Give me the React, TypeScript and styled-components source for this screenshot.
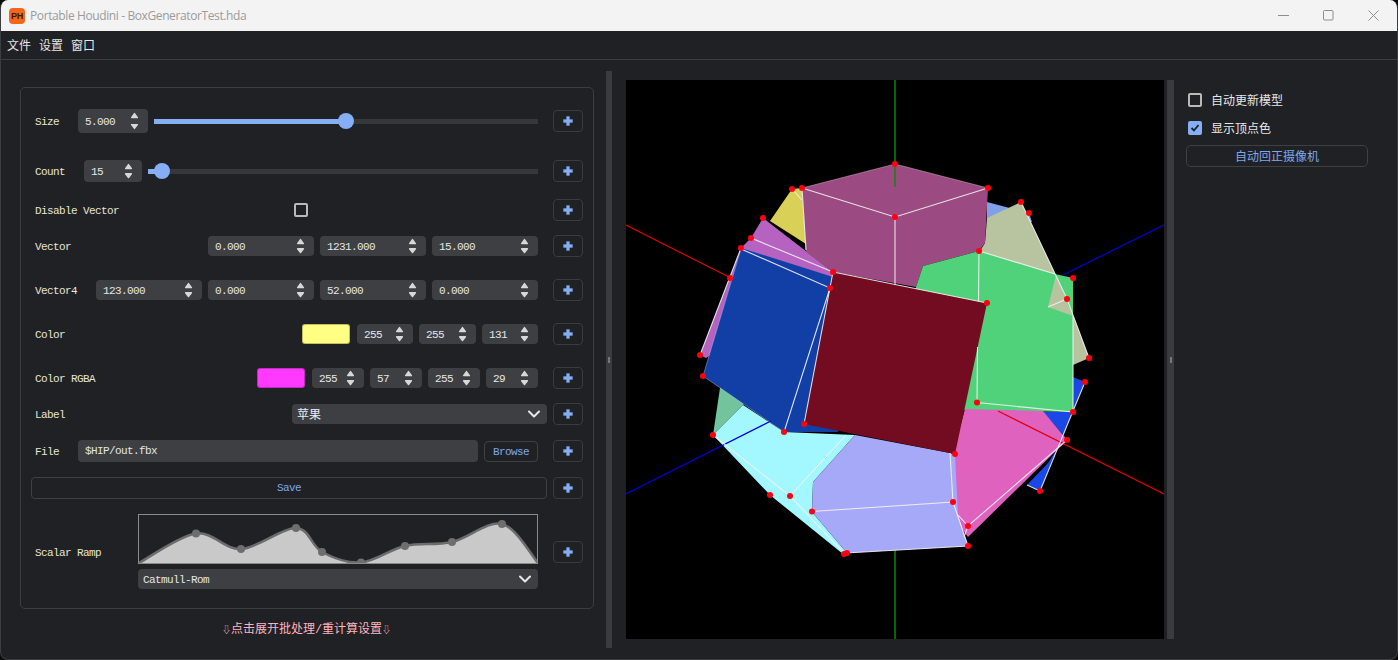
import React from "react";
import styled, { createGlobalStyle } from "styled-components";

const MONO = `"Liberation Mono", "Noto Sans CJK SC", monospace`;
const SANS = `"Noto Sans CJK SC", "Noto Sans", sans-serif`;

const Global = createGlobalStyle`
  html, body { margin: 0; padding: 0; background: #0b0b0c; overflow: hidden; }
  #root { width: 1398px; height: 660px; }
`;

const Win = styled.div`
  width: 1398px; height: 660px; box-sizing: border-box;
  border-radius: 8px; overflow: hidden; background: #202125;
  border: 1px solid #3c3d40; border-top: none;
  display: flex; flex-direction: column;
`;
const TitleBar = styled.div`
  height: 31px; flex: none; background: #f3f3f3; display: flex; align-items: center;
  padding-left: 9px; margin: 0 -1px;
`;
const AppIcon = styled.div`
  width: 16px; height: 16px; border-radius: 4px; background: #f4661c; color: #3a1a08;
  font: 700 9px/16px "Liberation Sans", sans-serif; text-align: center; flex: none; letter-spacing: -0.3px;
`;
const TitleText = styled.div`
  margin-left: 5px; font: 12px/16px "Open Sans", sans-serif; color: #9b9b9b; flex: 1; letter-spacing: -0.39px;
`;
const WinButtons = styled.div`
  display: flex; padding-right: 2px;
`;
const WinBtn = styled.div`
  width: 45px; height: 31px; display: flex; align-items: center; justify-content: center;
  svg { display: block; }
`;
const MenuBar = styled.div`
  height: 28px; flex: none; border-bottom: 1px solid #3c3d40; display: flex; align-items: center;
  padding-left: 6px; gap: 8px; box-sizing: content-box;
`;
const MenuItem = styled.span`
  font: 12px/16px ${SANS}; color: #e6e6e6;
`;
const Main = styled.div`
  flex: 1; display: flex; min-height: 0;
`;
const LeftPane = styled.div`
  width: 605px; flex: none; box-sizing: border-box; padding: 27px 12px 0 19px;
`;
const Card = styled.div`
  border: 1px solid #3c3d40; border-radius: 5px; padding: 21px 10px 19px 10px;
`;
const Row = styled.div<{ $h?: number; $mt?: number }>`
  display: grid; grid-template-columns: 1fr 30px; column-gap: 6px; align-items: center;
  ${(p) => (p.$h ? `height:${p.$h}px;` : "")}
  margin-top: ${(p) => p.$mt ?? 0}px;
`;
const Controls = styled.div<{ $full?: boolean }>`
  display: flex; align-items: center; gap: 6px; min-width: 0;
  padding-left: ${(p) => (p.$full ? 0 : 4)}px;
  padding-right: ${(p) => (p.$full ? 0 : 9)}px;
`;
const monoText = `font: 11px/16px ${MONO}; letter-spacing: -0.6px; padding-top: 2px;`;
const Label = styled.span<{ $w?: number; $auto?: boolean; $ml?: number }>`
  ${monoText} color: #e8e4d6; white-space: nowrap;
  ${(p) => (p.$w ? `width:${p.$w - 6}px; flex:none;` : "")}
  ${(p) => (p.$auto ? "margin-right:auto;" : "")}
  ${(p) => (p.$ml ? `margin-left:${p.$ml}px;` : "")}
`;
const SpinBox = styled.div<{ $w: number; $h: number }>`
  width: ${(p) => p.$w}px; height: ${(p) => p.$h}px; flex: none; box-sizing: border-box;
  background: #3e3f42; border-radius: 4px; display: flex; align-items: center; justify-content: space-between;
  padding: 0 9px 0 7px; color: #e4e6ea;
  svg { display: block; flex: none; }
`;
const SpinValue = styled.span`
  ${monoText}
`;
const SliderTrack = styled.div`
  flex: 1; height: 5px; background: #36373a; position: relative;
`;
const SliderFill = styled.div`
  height: 100%; background: #85aef5;
`;
const Knob = styled.div`
  position: absolute; top: 50%; width: 16px; height: 16px; margin: -8px 0 0 -8px;
  border-radius: 50%; background: #85aef5;
`;
const PlusBtn = styled.div`
  width: 30px; height: 22px; box-sizing: border-box; border: 1px solid #3a3b3f; border-radius: 4px;
  display: flex; align-items: center; justify-content: center;
  svg { display: block; }
`;
const CheckCell = styled.div`
  flex: 1; display: flex; padding-left: 169px;
`;
const CheckBox = styled.div<{ $on?: boolean }>`
  width: 14px; height: 14px; box-sizing: border-box; border-radius: 2px; flex: none;
  border: 2px solid ${(p) => (p.$on ? "#85aef5" : "#b9b9b9")};
  background: ${(p) => (p.$on ? "#85aef5" : "transparent")};
  display: flex; align-items: center; justify-content: center;
  svg { display: block; }
`;
const Swatch = styled.div<{ $c: string }>`
  width: 48px; height: 20px; border-radius: 3px; flex: none; background: ${(p) => p.$c};
  box-sizing: border-box; border: 1px solid rgba(0,0,0,0.25); margin-right: 1px;
`;
const Select = styled.div<{ $w?: number }>`
  ${(p) => (p.$w ? `width:${p.$w}px; flex:none;` : "")}
  height: 20px; box-sizing: border-box; background: #3e3f42; border-radius: 4px;
  display: flex; align-items: center; justify-content: space-between; padding: 0 7px 0 5px;
  color: #eeeeee; font: 12px/16px ${SANS};
  svg { display: block; }
`;
const SelectMono = styled.span`
  ${monoText} color: #e4e6ea;
`;
const PathInput = styled.div`
  flex: 1; height: 22px; background: #3e3f42; border-radius: 4px; box-sizing: border-box;
  padding: 3px 7px 0; color: #e4e6ea; ${monoText} padding-top: 3px;
`;
const LinkBtn = styled.div<{ $grow?: boolean }>`
  ${(p) => (p.$grow ? "flex:1;" : "width:54px; flex:none;")}
  height: ${(p) => (p.$grow ? 22 : 21)}px; box-sizing: border-box; border: 1px solid #3f4044; border-radius: 4px;
  text-align: center; ${monoText} padding-top: 2px; color: #7ea8ea;
`;
const RampCol = styled.div`
  width: 400px; flex: none; display: flex; flex-direction: column; gap: 5px;
  svg { display: block; }
`;
const RampBox = styled.div`
  height: 50px; box-sizing: border-box; border: 1px solid #8a8a8a;
`;
const Expander = styled.div`
  margin-top: 13px; text-align: center; font: 12px/16px ${MONO}; color: #ffb4c0; padding-right: 1px;
`;
const ExpArrow = styled.span`
  font-size: 9px;
`;
const Splitter = styled.div<{ $mt: number; $h: number; $w: number }>`
  width: ${(p) => p.$w}px; height: ${(p) => p.$h}px; margin-top: ${(p) => p.$mt}px; flex: none;
  background: #3a3b3e; display: flex; align-items: center; justify-content: center;
`;
const Grip = styled.div`
  width: 2px; height: 6px; background: #77787b;
`;
const Viewport = styled.div`
  width: 538px; height: 559px; margin: 20px 3px 0 14px; background: #000; flex: none;
  svg { display: block; }
`;
const SidePanel = styled.div`
  flex: 1; padding: 33px 0 0 12px; display: flex; flex-direction: column;
`;
const SideCheck = styled.div<{ $mt?: number }>`
  display: flex; align-items: center; gap: 9px; height: 14px; padding-left: 2px;
  margin-top: ${(p) => p.$mt ?? 0}px;
  font: 12px/14px ${SANS}; color: #e8e8e8;
`;
const CamBtn = styled.div`
  width: 182px; height: 22px; margin-top: 10px; box-sizing: border-box; border: 1px solid #3f4044; border-radius: 5px;
  text-align: center; font: 12px/20px ${SANS}; color: #7ea8ea;
`;

const Arrows = ({ tall }: { tall?: boolean }) => (
  <svg width="9" height={tall ? 18 : 16} viewBox={tall ? "0 0 9 18" : "0 0 9 16"} fill="#d8d8d8" stroke="#d8d8d8" strokeWidth="1.4" strokeLinejoin="round">
    <path d="M1.6 5.6 L4.5 1.6 L7.4 5.6 Z" />
    <path d={tall ? "M1.6 12.6 L7.4 12.6 L4.5 16.4 Z" : "M1.6 10.8 L7.4 10.8 L4.5 14.6 Z"} />
  </svg>
);
const Spin = ({ v, w, h = 20 }: { v: string; w: number; h?: number }) => (
  <SpinBox $w={w} $h={h}>
    <SpinValue>{v}</SpinValue>
    <Arrows tall={h > 22} />
  </SpinBox>
);
const Plus = () => (
  <PlusBtn>
    <svg width="10" height="10" viewBox="0 0 10 10">
      <path d="M3.5 0.5 h3 v3 h3 v3 h-3 v3 h-3 v-3 h-3 v-3 h3 Z" fill="#85aef5" stroke="#85aef5" strokeWidth="0.3" strokeLinejoin="round" />
    </svg>
  </PlusBtn>
);
const Chevron = () => (
  <svg width="12" height="8" viewBox="0 0 12 8" fill="none" stroke="#e8e8e8" strokeWidth="2" strokeLinecap="round" strokeLinejoin="round">
    <path d="M1 1.5 L6 6.5 L11 1.5" />
  </svg>
);

const rampPts: [number, number][] = [
  [0, 49], [57, 19.5], [102, 35], [157, 14], [183, 38], [222, 48.5], [266, 32], [313, 28], [363, 10], [399, 49],
];
const rampPath = () => {
  let d = `M${rampPts[0][0]} ${rampPts[0][1]}`;
  for (let i = 0; i < rampPts.length - 1; i++) {
    const p0 = rampPts[Math.max(i - 1, 0)], p1 = rampPts[i], p2 = rampPts[i + 1], p3 = rampPts[Math.min(i + 2, rampPts.length - 1)];
    const c1 = [p1[0] + (p2[0] - p0[0]) / 6, p1[1] + (p2[1] - p0[1]) / 6];
    const c2 = [p2[0] - (p3[0] - p1[0]) / 6, p2[1] - (p3[1] - p1[1]) / 6];
    d += ` C${c1[0]} ${c1[1]} ${c2[0]} ${c2[1]} ${p2[0]} ${p2[1]}`;
  }
  return d;
};

const Ramp = () => {
  const d = rampPath();
  return (
    <RampBox>
      <svg width="398" height="48" viewBox="0 1 398 48">
        <path d={`${d} Z`} fill="#c9c9c9" />
        <path d={d} fill="none" stroke="#6c6c6c" strokeWidth="2.5" />
        {rampPts.slice(1, -1).map(([x, y]) => (
          <circle key={x} cx={x} cy={y} r="4" fill="#6e6e6e" />
        ))}
      </svg>
    </RampBox>
  );
};

type Poly = { c: string; p: string };
const polys: Poly[] = [
  { c: "#7f9fe8", p: "987,202 1021,211 1029,213 1032,222 987,218" },
  { c: "#d9d058", p: "792,189 802,188 806,244 770,221" },
  { c: "#b562c0", p: "763,218 833,272 833,278 790,300 706,358 700,355 741,248 751,238" },
  { c: "#b8c4a0", p: "1021,202 1067,299 1089,358 1073,365 1040,330 1000,290 980,251 985,243 987,218" },
  { c: "#72c49c", p: "720,388 735,340 760,380 743,405 713,435" },
  { c: "#123fa6", p: "741,248 833,277 834,289 826,307 838,432 784,432 703,376" },
  { c: "#9c4a82", p: "802,188 895,164 988,188 985,243 979,251 923,266 916,287 833,272 806,252" },
  { c: "#1a48e6", p: "1073,377 1085,382 1040,491 1027,485 1048,463 1065,437 1043,412 1073,412" },
  { c: "#50d27a", p: "923,266 979,251 1055,274 1073,278 1073,412 964,410 900,400 916,287" },
  { c: "#b8c4a0", p: "1056,275 1073,316 1048,307" },
  { c: "#a3f7ff", p: "713,435 743,405 784,432 855,435 813,482 812,512 847,553 843,554 770,495" },
  { c: "#e062bf", p: "965,409 1043,411 1067,440 968,537 955,520 953,453" },
  { c: "#a6a8f8", p: "855,435 950,453 955,455 958,515 968,546 847,553 812,512 813,482" },
  { c: "#123fa6", p: "784,432 804,424 838,432" },
  { c: "#730c21", p: "833,272 987,303 955,454 804,424" },
];
const whites: string[] = [
  "802,188 895,217 988,188", "895,217 895,285", "802,188 806,250",
  "741,249 830,288 784,432", "833,272 804,424", "751,238 833,272", "700,355 741,248",
  "792,189 802,200", "979,251 978.5,301", "977.5,347 977,402.5 1073,412", "1073,316 1073,412", "979,251 1055,274",
  "1021,202 1067,299 1089,358", "1048,307 1067,299", "713,435 790,496 845,554", "790,496 846,435",
  "812,511.5 953,502 950,453", "953,502 968,546 846,553", "1067,440 968,526 958,515", "968,526 964,537",
  "1027,485 1040,491 1085,382", "833,272 987,303",
];
const softs: string[] = ["802,188 895,164 988,188", "703,376 741,249", "703,376 784,432"];
const dots: [number, number][] = [
  [895, 164], [792, 189], [802, 188], [988, 188], [895, 217], [763, 218], [751, 238], [741, 248], [730, 278], [833, 272],
  [830, 288], [700, 355], [703, 376], [784, 432], [804, 424], [713, 435], [790, 496], [770, 495], [812, 511.5], [844, 554],
  [847, 553], [968, 546], [953, 502], [968, 526], [955, 454], [1067, 440], [1040, 491], [1073, 412], [977, 402.5], [1085, 382],
  [1089, 358], [1067, 299], [1073, 278], [987, 303], [979, 251], [1021, 202], [1029, 213],
];

const Scene = () => (
  <svg width="538" height="559" viewBox="626 80 538 559">
    <line x1="895" y1="540" x2="895" y2="639" stroke="#0a8a0a" strokeWidth="1.5" />
    <line x1="626" y1="225" x2="731" y2="278" stroke="#e0000c" strokeWidth="1.2" />
    <line x1="1063" y1="275" x2="1164" y2="225" stroke="#0000d8" strokeWidth="1.2" />
    {polys.map((o, i) => (
      <polygon key={i} points={o.p} fill={o.c} />
    ))}
    <line x1="895" y1="80" x2="895" y2="187" stroke="#0a8a0a" strokeWidth="1.5" />
    <line x1="998" y1="411" x2="1164" y2="494" stroke="#e0000c" strokeWidth="1.2" />
    <line x1="626" y1="494" x2="771" y2="421" stroke="#0000d8" strokeWidth="1.2" />
    {softs.map((p, i) => (
      <polyline key={i} points={p} fill="none" stroke="#f2f2f2" strokeOpacity="0.35" strokeWidth="1" />
    ))}
    {whites.map((p, i) => (
      <polyline key={i} points={p} fill="none" stroke="#f2f2f2" strokeOpacity="0.9" strokeWidth="1.1" />
    ))}
    {dots.map(([x, y], i) => (
      <circle key={i} cx={x} cy={y} r="3" fill="#ff0010" />
    ))}
  </svg>
);

export default function App() {
  return (
    <>
      <Global />
      <Win>
        <TitleBar>
          <AppIcon>PH</AppIcon>
          <TitleText>Portable Houdini - BoxGeneratorTest.hda</TitleText>
          <WinButtons>
            <WinBtn>
              <svg width="11" height="11" viewBox="0 0 11 11"><path d="M0 5.5 H11" stroke="#8d8d8d" /></svg>
            </WinBtn>
            <WinBtn>
              <svg width="11" height="11" viewBox="0 0 11 11"><rect x="0.5" y="0.5" width="9.5" height="9.5" rx="1" fill="none" stroke="#8d8d8d" /></svg>
            </WinBtn>
            <WinBtn>
              <svg width="11" height="11" viewBox="0 0 11 11"><path d="M0.5 0.5 L10.5 10.5 M10.5 0.5 L0.5 10.5" stroke="#8d8d8d" /></svg>
            </WinBtn>
          </WinButtons>
        </TitleBar>
        <MenuBar>
          <MenuItem>文件</MenuItem>
          <MenuItem>设置</MenuItem>
          <MenuItem>窗口</MenuItem>
        </MenuBar>
        <Main>
          <LeftPane>
            <Card>
              <Row $h={24}>
                <Controls>
                  <Label $w={43}>Size</Label>
                  <Spin v="5.000" w={70} h={24} />
                  <SliderTrack>
                    <SliderFill style={{ width: "50%" }} />
                    <Knob style={{ left: "50%" }} />
                  </SliderTrack>
                </Controls>
                <Plus />
              </Row>
              <Row $h={22} $mt={27}>
                <Controls>
                  <Label $w={49}>Count</Label>
                  <Spin v="15" w={58} h={22} />
                  <SliderTrack>
                    <SliderFill style={{ width: "3.6%" }} />
                    <Knob style={{ left: "3.6%" }} />
                  </SliderTrack>
                </Controls>
                <Plus />
              </Row>
              <Row $h={22} $mt={17}>
                <Controls>
                  <Label>Disable Vector</Label>
                  <CheckCell>
                    <CheckBox />
                  </CheckCell>
                </Controls>
                <Plus />
              </Row>
              <Row $h={22} $mt={14}>
                <Controls>
                  <Label $auto>Vector</Label>
                  <Spin v="0.000" w={106} />
                  <Spin v="1231.000" w={106} />
                  <Spin v="15.000" w={106} />
                </Controls>
                <Plus />
              </Row>
              <Row $h={22} $mt={22}>
                <Controls>
                  <Label $auto>Vector4</Label>
                  <Spin v="123.000" w={106} />
                  <Spin v="0.000" w={106} />
                  <Spin v="52.000" w={106} />
                  <Spin v="0.000" w={106} />
                </Controls>
                <Plus />
              </Row>
              <Row $h={22} $mt={22}>
                <Controls>
                  <Label $auto>Color</Label>
                  <Swatch $c="#ffff83" />
                  <Spin v="255" w={56} />
                  <Spin v="255" w={57} />
                  <Spin v="131" w={56} />
                </Controls>
                <Plus />
              </Row>
              <Row $h={22} $mt={22}>
                <Controls>
                  <Label $auto>Color RGBA</Label>
                  <Swatch $c="#ff39ff" />
                  <Spin v="255" w={52} />
                  <Spin v="57" w={52} />
                  <Spin v="255" w={52} />
                  <Spin v="29" w={52} />
                </Controls>
                <Plus />
              </Row>
              <Row $h={22} $mt={14}>
                <Controls $full>
                  <Label $auto $ml={4}>Label</Label>
                  <Select $w={255}>
                    <span>苹果</span>
                    <Chevron />
                  </Select>
                </Controls>
                <Plus />
              </Row>
              <Row $h={22} $mt={15}>
                <Controls>
                  <Label $w={43}>File</Label>
                  <PathInput>$HIP/out.fbx</PathInput>
                  <LinkBtn>Browse</LinkBtn>
                </Controls>
                <Plus />
              </Row>
              <Row $h={22} $mt={15}>
                <Controls $full>
                  <LinkBtn $grow>Save</LinkBtn>
                </Controls>
                <Plus />
              </Row>
              <Row $mt={15}>
                <Controls>
                  <Label $auto>Scalar Ramp</Label>
                  <RampCol>
                    <Ramp />
                    <Select>
                      <SelectMono>Catmull-Rom</SelectMono>
                      <Chevron />
                    </Select>
                  </RampCol>
                </Controls>
                <Plus />
              </Row>
            </Card>
            <Expander><ExpArrow>⇩</ExpArrow>点击展开批处理/重计算设置<ExpArrow>⇩</ExpArrow></Expander>
          </LeftPane>
          <Splitter $w={6} $mt={11} $h={577}>
            <Grip />
          </Splitter>
          <Viewport>
            <Scene />
          </Viewport>
          <Splitter $w={7} $mt={20} $h={559}>
            <Grip />
          </Splitter>
          <SidePanel>
            <SideCheck>
              <CheckBox />
              <span>自动更新模型</span>
            </SideCheck>
            <SideCheck $mt={14}>
              <CheckBox $on>
                <svg width="10" height="10" viewBox="0 0 10 10" fill="none" stroke="#1e2026" strokeWidth="1.8">
                  <path d="M1.5 5 L4 7.5 L8.5 2" />
                </svg>
              </CheckBox>
              <span>显示顶点色</span>
            </SideCheck>
            <CamBtn>自动回正摄像机</CamBtn>
          </SidePanel>
        </Main>
      </Win>
    </>
  );
}
